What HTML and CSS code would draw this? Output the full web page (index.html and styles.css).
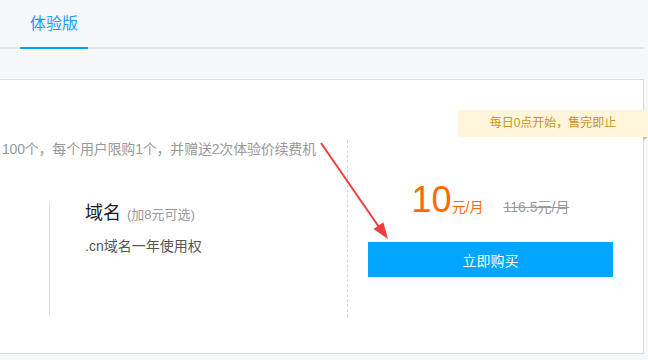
FILE: index.html
```html
<!DOCTYPE html>
<html lang="zh-CN">
<head>
<meta charset="utf-8">
<title>体验版</title>
<link rel="stylesheet" href="styles.css">
</head>
<body>
  <div class="tabs">
    <div class="tab active">体验版</div>
  </div>
  <div class="main">
    <div class="card">
      <div class="ribbon">每日0点开始，售完即止<span class="fold"></span></div>
      <div class="left">
        <div class="desc">100个，每个用户限购1个，并赠送2次体验价续费机</div>
        <div class="feature">
          <div class="feature-title">域名<span class="opt">(加8元可选)</span></div>
          <div class="feature-sub">.cn域名一年使用权</div>
        </div>
      </div>
      <div class="right">
        <div class="price">
          <div class="now"><span class="num">10</span><span class="unit">元/月</span></div>
          <div class="old">116.5元/月</div>
        </div>
        <div class="buy">立即购买</div>
      </div>
      <svg class="arrow" width="644" height="273" viewBox="0 0 644 273">
        <line x1="321" y1="63" x2="379" y2="147" stroke="#f03c3c" stroke-width="2"/>
        <polygon points="388,159 373.5,149.1 383.3,142.2" fill="#f03c3c"/>
      </svg>
    </div>
  </div>
</body>
</html>
```
FILE: styles.css
```css
html, body {
  margin: 0;
  padding: 0;
}
body {
  background: #f6f7f9;
  font-family: "Liberation Sans", "Noto Sans CJK SC", sans-serif;
  width: 648px;
  height: 360px;
  overflow: hidden;
}
.tabs {
  width: 624px;
  height: 47px;
  padding-left: 20px;
  border-bottom: 2px solid #e3e4e7;
  display: flex;
}
.tab {
  padding: 0 10px;
  height: 47px;
  line-height: 47px;
  font-size: 16px;
  color: #1a9cff;
}
.tab.active {
  border-bottom: 2px solid #00a2ff;
}
.main {
  padding-top: 30px;
}
.card {
  position: relative;
  margin-left: -1px;
  width: 643px;
  height: 213px;
  padding-top: 60px;
  background: #fff;
  border: 1px solid #dcdcdc;
  display: flex;
}
.ribbon {
  position: absolute;
  top: 30px;
  right: -5px;
  width: 190px;
  height: 27px;
  line-height: 27px;
  text-align: center;
  font-size: 12px;
  color: #c8922d;
  background: #fff5da;
}
.fold {
  position: absolute;
  top: 27px;
  right: 0;
  width: 0;
  height: 0;
  border-top: 4px solid #d6c59d;
  border-right: 5px solid transparent;
}
.left {
  width: 347px;
  height: 177px;
  border-right: 1px dashed #d8d8d8;
  flex: none;
}
.desc {
  padding-left: 2px;
  font-size: 14px;
  line-height: 18px;
  letter-spacing: -0.2px;
  color: #999;
  white-space: nowrap;
}
.feature {
  margin-top: 44px;
  margin-left: 49px;
  height: 115px;
  padding-left: 35px;
  border-left: 1px solid #dedede;
}
.feature-title {
  font-size: 18px;
  line-height: 22px;
  color: #1a1a1a;
}
.opt {
  margin-left: 6px;
  font-size: 13px;
  color: #999;
}
.feature-sub {
  margin-top: 10px;
  font-size: 14px;
  line-height: 20px;
  color: #555;
}
.right {
  flex: 1;
  padding: 40px 30px 0 20px;
}
.price {
  height: 40px;
  line-height: 40px;
  display: flex;
  justify-content: center;
  align-items: baseline;
  gap: 20px;
  white-space: nowrap;
}
.now {
  color: #ff6a00;
}
.num {
  font-size: 36px;
}
.unit {
  font-size: 14px;
}
.old {
  font-size: 14px;
  color: #999;
  text-decoration: line-through;
}
.buy {
  margin-top: 22px;
  height: 35px;
  background: #00a6ff;
  color: #fff;
  font-size: 14px;
  display: flex;
  align-items: center;
  justify-content: center;
}
.arrow {
  position: absolute;
  left: 0;
  top: 0;
  pointer-events: none;
}
```
